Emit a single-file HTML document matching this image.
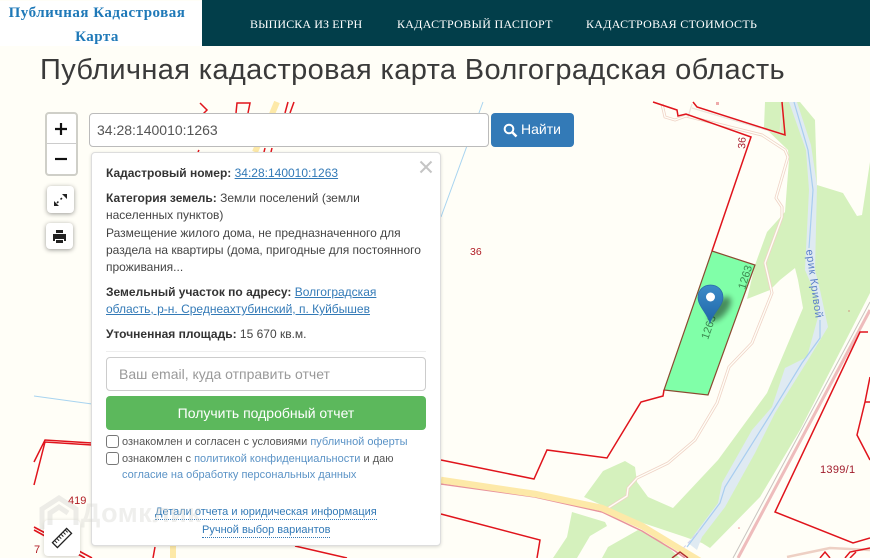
<!DOCTYPE html>
<html lang="ru">
<head>
<meta charset="utf-8">
<title>Публичная кадастровая карта</title>
<style>
html,body{margin:0;padding:0}
body{width:870px;height:558px;overflow:hidden;background:#fffef7;position:relative;font-family:"Liberation Sans",Arial,sans-serif;color:#333}
.a{position:absolute;white-space:nowrap}
#logobg{left:0;top:1px;width:202px;height:45px;background:#fff}
#logo{left:0;top:1px;width:194px;height:45px;text-align:center;font:bold 15px/24px "Liberation Serif",serif;color:#1f79b8;letter-spacing:.5px}
#nav{left:202px;top:0;width:668px;height:46px;background:#023e4a}
.n{top:16px;font:12px/16px "Liberation Serif",serif;color:#fff;letter-spacing:.3px}
h1{position:absolute;margin:0;left:40px;top:53px;font:300 29px/34px "Liberation Sans",sans-serif;color:#3a3a3a;white-space:nowrap;letter-spacing:.36px}
svg#map{position:absolute;left:0;top:0}
#search{left:89px;top:113px;width:398px;height:32px;background:#fff;border:1px solid #bbb;border-radius:4px;font-size:14px;line-height:33px;color:#555;text-indent:7px}
#find{left:491px;top:113px;width:83px;height:34px;background:#337ab7;border-radius:4px;color:#fff;font-size:14px;line-height:33px}
#pop{left:91px;top:152px;width:348px;height:392px;background:#fff;border:1px solid #ddd;border-radius:4px;box-shadow:0 1px 3px rgba(0,0,0,.15)}
.t{left:106px;font-size:12px;line-height:17px;color:#444}
.t b{color:#333}
a,.l{color:#337ab7}
.u{text-decoration:underline}
.c{left:122px;font-size:11px;line-height:15px;color:#555}
.c span{color:#5b93c6}
.box{left:106px;width:11px;height:11px;border:1px solid #777;border-radius:3px;background:#fff}
.d{font-size:11px;line-height:14px;color:#337ab7;border-bottom:1px dotted #337ab7}
.ctl{background:#fff;border-radius:4px;box-shadow:0 1px 5px rgba(0,0,0,.4)}
</style>
</head>
<body>
<svg id="map" width="870" height="558" viewBox="0 0 870 558">
<defs><filter id="bl" x="-50%" y="-50%" width="200%" height="200%"><feGaussianBlur stdDeviation="3"/></filter>
<linearGradient id="pg" x1="0" y1="0" x2="0" y2="1"><stop offset="0" stop-color="#3c8cc8"/><stop offset="1" stop-color="#1f66a8"/></linearGradient></defs>
<!-- greens -->
<path fill="#d5f1bd" d="M765 102L764 127L788 150L789 160L785 212L767 232L755 265L747 299L770 290L780 280L795 268L798 280L803 308L767 393L718 460L673 508L648 497L637 482L635 467L625 461L603 471L584 497L608 508L640 522L685 537L702 543L710 548L760 497L800 430L870 293L870 162L862 215L857 216L843 193L817 185L815 120L800 102Z"/>
<path fill="#d5f1bd" d="M572 512L605 522L607 526L590 536L577 558L553 558L567 537ZM638 530L608 547L602 558L680 558L660 540Z"/>
<!-- water -->
<path fill="#dfeaf2" d="M789 102L806 150L809 190L805 270L818 300L818 317L807 357L785 368L772 407L752 430L722 483L718 503L688 543L697 550L702 537L725 507L755 453L775 413L808 360L828 327L820 290L815 270L817 185L811 145L797 102Z"/>
<path fill="none" stroke="#a8cdf0" stroke-width="1.2" d="M794 102L808 150L813 190L809 248M820 320L820 338L802 363L772 412L725 487L720 503L687 547"/>
<path fill="none" stroke="#d0d0ee" stroke-width="1" stroke-dasharray="4 3" d="M700 530L676 556"/>
<!-- field -->
<path fill="#80ffa8" stroke="#8a4a30" stroke-width="1.2" d="M712 251L755 265L708 395L664 390Z"/>
<!-- pink double roads -->
<g fill="none" stroke-linejoin="round">
<path stroke="#efd3c6" stroke-width="3" d="M662 104L665 117L675 120L686 116L762 135L785 150L788 157L776 198L782 207L782 217L765 263L772 293L752 343L729 367L717 403L695 440L668 463L637 478L628 488L627 496L608 508"/>
<path stroke="#fffef7" stroke-width="1.4" d="M662 104L665 117L675 120L686 116L762 135L785 150L788 157L776 198L782 207L782 217L765 263L772 293L752 343L729 367L717 403L695 440L668 463L637 478L628 488L627 496L608 508"/>
<path stroke="#ebe6de" stroke-width="1.3" d="M688 117L692 104M692 108L780 134L782 110"/>
<path stroke="#eebcbc" stroke-width="3" d="M870 310L738 558"/>
<path stroke="#c8c4c0" stroke-width="1" d="M870 302L733 558"/>
<path stroke="#eed0c4" stroke-width="2.500" d="M787 557L830 548L870 550"/>
</g>
<!-- yellow road -->
<path fill="none" stroke="#e8929c" stroke-width="1.500" d="M441 484L535 497L602 512L642 531L675 551L685 558"/>
<path fill="none" stroke="#fde9a8" stroke-width="6.500" d="M441 480L535 494L602 508L642 526L675 546L705 564"/>
<path fill="none" stroke="#fde9a8" stroke-width="6" d="M173 545L173 558M277 102L272 114M258 145L255 152"/>
<!-- red outlines -->
<g fill="none" stroke="#e0141c" stroke-width="1.500" stroke-linejoin="miter">
<path d="M712 251L751 137L686 114L678 116L677 110L653 102"/>
<path d="M693 102L697 107L785 135L782 102"/>
<path d="M664 390L663 396L641 402L607 458L547 450L534 479L441 460"/>
<path d="M441 514L540 540L537 558"/>
<path d="M868 332L860 332L775 512L853 543L870 538"/>
<path d="M870 377L865 402L857 435L870 460M865 402L870 402"/>
<path d="M34 462L45 440L92 443M34 485L45 442L92 445"/>
<path d="M34 527L92 558M34 530L85 558" stroke-width="1.600"/>
<path d="M155 547L153 558M295 546L347 558"/>
<path d="M200 103L207 110L200 117M236 113L237 103L250 103L248 113M288 102L285 113M294 102L290 113M199 150L198 152M265 148L264 152M272 148L271 152"/>
<path d="M820 558L825 552L830 558M845 558L850 552L870 548M850 558L856 552"/>
<path d="M672 558L680 552L688 558" stroke="#b03030"/>
</g>
<path fill="none" stroke="#a8d4f0" stroke-width="1" d="M483 102L441 217M34 396L92 404"/>
<circle cx="739" cy="528" r=".8" fill="#e88"/><circle cx="849" cy="311" r=".6" fill="#c55"/>
<path fill="#eaa" d="M716 102h3v3h-3z"/>
<!-- labels -->
<g font-family="Liberation Sans,sans-serif" font-size="11">
<text x="470" y="255" fill="#b01c24" font-size="10.500">36</text>
<text x="820" y="473" fill="#a01c2c" letter-spacing=".3">1399/1</text>
<text x="68" y="504" fill="#b01c24">419</text>
<text x="34" y="553" fill="#b01c24">7</text>
<text transform="translate(745,149) rotate(-86)" fill="#a82030" font-size="10.500">36</text>
<text transform="translate(745,290) rotate(-73)" fill="#3c8a50" font-size="11">1263</text>
<text transform="translate(708,340) rotate(-71)" fill="#3c8a50" font-size="11">1263</text>
<text transform="translate(806,250) rotate(82)" fill="#5a80c8" font-size="11" letter-spacing=".6">ерик Кривой</text>
</g>
<!-- pin -->
<ellipse cx="720" cy="309" rx="7" ry="15" fill="#000" opacity=".45" filter="url(#bl)" transform="rotate(40 720 309)"/>
<path fill="url(#pg)" stroke="#2a6ca8" stroke-width=".7" d="M710 323C707 313 698 306 698 297.500C698 290 703.500 285 710.500 285C717.500 285 723 290 723 297.500C723 306 713 313 710 323Z"/>
<circle cx="710.500" cy="297" r="4.500" fill="#fff"/>
</svg>

<div class="a" id="logobg"></div>
<div class="a" id="logo">Публичная Кадастровая<br>Карта</div>
<div class="a" id="nav"></div>
<div class="a n" style="left:250px;letter-spacing:.1px">ВЫПИСКА ИЗ ЕГРН</div>
<div class="a n" style="left:397px">КАДАСТРОВЫЙ ПАСПОРТ</div>
<div class="a n" style="left:586px">КАДАСТРОВАЯ СТОИМОСТЬ</div>
<h1>Публичная кадастровая карта Волгоградская область</h1>

<!-- map controls -->
<div class="a" style="left:45px;top:112px;width:29px;height:60px;background:#fff;border:2px solid #cfcfc8;border-radius:4px"></div>
<div class="a" style="left:47px;top:143px;width:29px;height:1px;background:#ccc"></div>
<svg class="a" style="left:45px;top:112px" width="32" height="64"><path d="M16 11v12M10 17h12" stroke="#111" stroke-width="2.200"/><path d="M10 47h12" stroke="#111" stroke-width="2.200"/></svg>
<div class="a ctl" style="left:47px;top:186px;width:27px;height:27px"></div>
<svg class="a" style="left:47px;top:186px" width="27" height="27"><path d="M10 17L17 10" stroke="#222" stroke-width="1.500" stroke-dasharray="2 3"/><path d="M15 8h5v5zM7 15v5h5z" fill="#222"/></svg>
<div class="a ctl" style="left:46px;top:223px;width:27px;height:26px"></div>
<svg class="a" style="left:46px;top:223px" width="27" height="26"><path fill="#222" d="M10 7h7v3h-7zM7 11h13v7h-2v-2h-9v2h-2zM10 17h7v3h-7z"/></svg>
<div class="a ctl" style="left:44px;top:520px;width:36px;height:36px;box-shadow:0 1px 4px rgba(0,0,0,.2)"></div>
<svg class="a" style="left:44px;top:520px" width="36" height="36"><g transform="rotate(-45 18 18)"><rect x="8" y="14.500" width="20" height="7" fill="#fff" stroke="#222" stroke-width="1.300"/><path d="M11 15v3M14 15v3M17 15v3M20 15v3M23 15v3M26 15v3" stroke="#222" stroke-width="1"/></g></svg>

<div class="a" id="search">34:28:140010:1263</div>
<div class="a" id="find"><svg style="position:absolute;left:12px;top:10px" width="15" height="15"><circle cx="6" cy="6" r="4.300" fill="none" stroke="#fff" stroke-width="2"/><path d="M9 9l4.500 4.500" stroke="#fff" stroke-width="2.500"/></svg><span style="position:absolute;left:30px">Найти</span></div>

<!-- popup -->
<div class="a" id="pop"></div>
<svg class="a" style="left:419px;top:160px" width="14" height="14"><path d="M1.500 1.500L12.500 12.500M12.500 1.500L1.500 12.500" stroke="#c4c4c4" stroke-width="2"/></svg>
<div class="a t" style="top:165px"><b>Кадастровый номер:</b> <a class="u">34:28:140010:1263</a></div>
<div class="a t" style="top:190px"><b>Категория земель:</b> Земли поселений (земли</div>
<div class="a t" style="top:207px">населенных пунктов)</div>
<div class="a t" style="top:225px">Размещение жилого дома, не предназначенного для</div>
<div class="a t" style="top:242px">раздела на квартиры (дома, пригодные для постоянного</div>
<div class="a t" style="top:259px">проживания...</div>
<div class="a t" style="top:284px"><b>Земельный участок по адресу:</b> <a class="u">Волгоградская</a></div>
<div class="a t" style="top:301px"><a class="u">область, р-н. Среднеахтубинский, п. Куйбышев</a></div>
<div class="a t" style="top:326px"><b>Уточненная площадь:</b> 15 670 кв.м.</div>
<div class="a" style="left:106px;top:351px;width:320px;height:1px;background:#eee"></div>
<div class="a" style="left:106px;top:357px;width:318px;height:32px;background:#fff;border:1px solid #ccc;border-radius:4px;font-size:14px;line-height:33px;color:#999;text-indent:12px">Ваш email, куда отправить отчет</div>
<div class="a" style="left:106px;top:396px;width:320px;height:34px;background:#5cb85c;border-radius:4px;color:#fff;font-size:14px;line-height:34px;text-align:center">Получить подробный отчет</div>
<div class="a box" style="top:435px"></div>
<div class="a c" style="top:435px">ознакомлен и согласен с условиями <span>публичной оферты</span></div>
<div class="a box" style="top:452px"></div>
<div class="a c" style="top:452px">ознакомлен с <span>политикой конфиденциальности</span> и даю</div>
<div class="a c" style="top:468px"><span>согласие на обработку персональных данных</span></div>
<div class="a d" style="left:155px;top:505px">Детали отчета и юридическая информация</div>
<div class="a d" style="left:202px;top:523px">Ручной выбор вариантов</div>

<!-- watermark -->
<div class="a" style="left:81px;top:497px;font:bold 27px/32px 'Liberation Sans',sans-serif;color:rgba(215,215,210,.4);letter-spacing:.5px">Домклик</div>
<svg class="a" style="left:38px;top:495px" width="42" height="36"><path d="M4 34V14L21 3L38 14V30M12 30V18L21 12L30 18" fill="none" stroke="rgba(215,215,210,.45)" stroke-width="5"/></svg>
</body>
</html>
